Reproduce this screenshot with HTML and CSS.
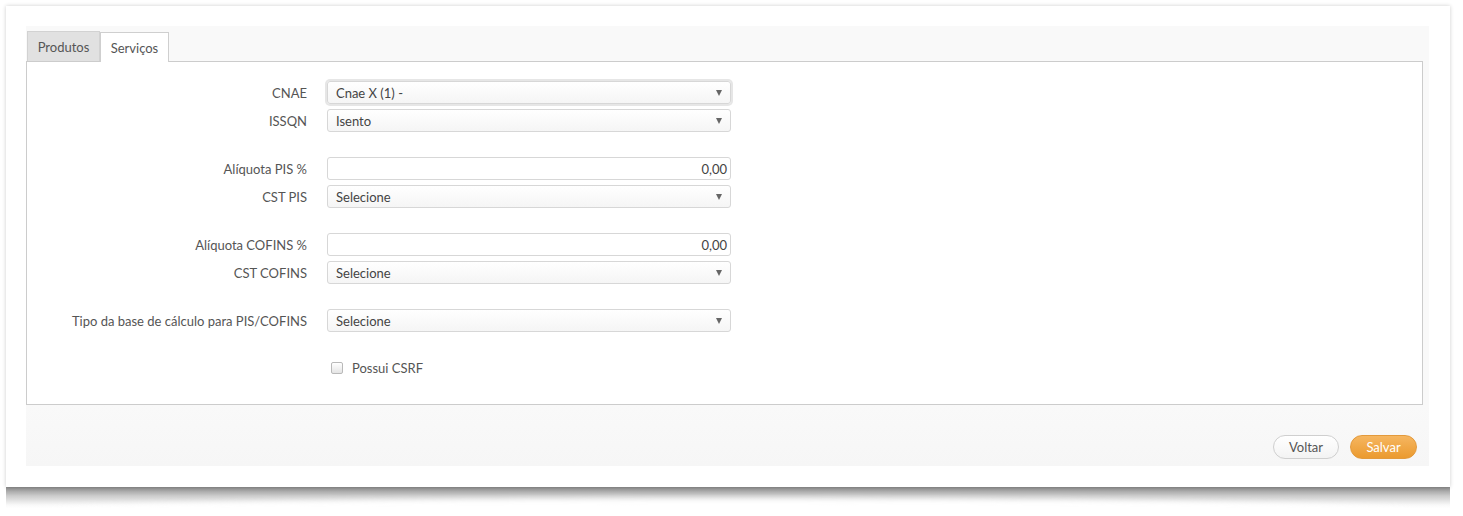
FILE: index.html
```html
<!DOCTYPE html>
<html lang="pt">
<head>
<meta charset="utf-8">
<title>Serviços</title>
<link rel="stylesheet" href="styles.css">
</head>
<body>
<div class="sheet">
  <div class="card">
    <div class="inner">
      <div class="tabs">
        <div class="tab">Produtos</div>
        <div class="tab active">Serviços</div>
      </div>
      <div class="panel">
        <div class="group">
          <div class="row"><label class="lbl">CNAE</label><div class="select focus"><span>Cnae X (1) -</span><span class="caret"></span></div></div>
          <div class="row"><label class="lbl">ISSQN</label><div class="select"><span>Isento</span><span class="caret"></span></div></div>
        </div>
        <div class="group">
          <div class="row"><label class="lbl">Alíquota PIS %</label><div class="input">0,00</div></div>
          <div class="row"><label class="lbl">CST PIS</label><div class="select"><span>Selecione</span><span class="caret"></span></div></div>
        </div>
        <div class="group">
          <div class="row"><label class="lbl">Alíquota COFINS %</label><div class="input">0,00</div></div>
          <div class="row"><label class="lbl">CST COFINS</label><div class="select"><span>Selecione</span><span class="caret"></span></div></div>
        </div>
        <div class="group group-tipo">
          <div class="row"><label class="lbl">Tipo da base de cálculo para PIS/COFINS</label><div class="select"><span>Selecione</span><span class="caret"></span></div></div>
        </div>
        <div class="group">
          <div class="row"><span class="lbl"></span><span class="checkbox"></span><span class="check-text">Possui CSRF</span></div>
        </div>
      </div>
      <div class="footer">
        <button class="btn btn-back">Voltar</button>
        <button class="btn btn-save">Salvar</button>
      </div>
    </div>
  </div>
  <div class="curl"></div>
</div>
</body>
</html>
```
FILE: styles.css
```css
* { box-sizing: border-box; }
html, body { margin: 0; padding: 0; background: #ffffff; }
body {
  font-family: Lato, "Open Sans", sans-serif;
  font-size: 13px;
  color: #555;
  padding: 6px 0 0 6px;
}
.sheet {
  width: 1444px;
}
.card {
  position: relative;
  z-index: 1;
  height: 481px;
  background: #fff;
  padding: 20px 21px 20px 20px;
  box-shadow: 0 0 4px rgba(0,0,0,0.2);
}
.curl {
  position: relative;
  height: 22px;
  margin: -1px 0 0 0;
  background: linear-gradient(to bottom, rgba(120,120,120,0.9), rgba(170,170,170,0.6) 45%, rgba(225,225,225,0.25) 85%, rgba(255,255,255,0));
  filter: blur(0.6px);
}
.curl::after {
  content: "";
  position: absolute;
  left: 2.5%;
  right: 2.5%;
  bottom: -18px;
  height: 27px;
  background: #fff;
  border-radius: 50%;
  filter: blur(3px);
}
.inner {
  background: linear-gradient(#f9f9f9, #f9f9f9 380px, #f6f6f6);
  height: 440px;
  padding: 5px 6px 0 0;
  display: flex;
  flex-direction: column;
}
.tabs {
  display: flex;
  height: 30px;
  padding-left: 1px;
}
.tab {
  height: 30px;
  line-height: 30px;
  width: 73px;
  text-align: center;
  background: #e1e1e1;
  border: 1px solid #d2d2d2;
  border-bottom: none;
  color: #555;
  font-size: 13px;
}
.tab.active {
  width: 69px;
  background: #fff;
  border-color: #cfcfcf;
  position: relative;
  top: 1px;
  z-index: 1;
}
.panel {
  background: #fff;
  border: 1px solid #cccccc;
  height: 344px;
  padding: 19px 0 0 0;
}
.group { margin-bottom: 25px; }
.group-tipo { margin-bottom: 24px; }
.row {
  display: flex;
  align-items: center;
  height: 23px;
  margin-bottom: 5px;
}
.group .row:last-child { margin-bottom: 0; }
.lbl {
  width: 280px;
  text-align: right;
  margin-right: 20px;
  color: #555;
  font-size: 13px;
}
.select, .input {
  width: 404px;
  height: 23px;
  border: 1px solid #d7d7d7;
  border-radius: 3px;
  padding: 0 8px;
  display: flex;
  align-items: center;
  justify-content: space-between;
  font-size: 13px;
  color: #444;
}
.select {
  background: linear-gradient(#ffffff, #f5f5f5);
}
.select.focus {
  box-shadow: 0 0 0 2px #e6e6e6;
}
.input {
  justify-content: flex-end;
  padding-right: 3px;
  background: #fff;
}
.caret {
  width: 0;
  height: 0;
  border-left: 3.5px solid transparent;
  border-right: 3.5px solid transparent;
  border-top: 6px solid #666;
}
.checkbox {
  width: 12px;
  height: 12px;
  border: 1px solid #b9b9b9;
  border-radius: 2px;
  background: linear-gradient(#fff, #e4e4e4);
  margin-left: 4px;
}
.check-text {
  margin-left: 9px;
  color: #555;
}
.footer {
  flex: 1;
  display: flex;
  justify-content: flex-end;
  align-items: flex-start;
  padding-top: 30px;
  padding-right: 6px;
  gap: 11px;
}
.btn {
  height: 24px;
  border-radius: 12px;
  font-family: Lato, "Open Sans", sans-serif;
  font-size: 13px;
  padding: 0;
  cursor: pointer;
}
.btn-back {
  width: 66px;
  background: linear-gradient(#ffffff, #f3f3f3);
  border: 1px solid #cfcfcf;
  color: #555;
}
.btn-save {
  width: 67px;
  background: linear-gradient(#f6b660, #eb9a2f);
  border: 1px solid #e39a3c;
  color: #fff;
}
```
